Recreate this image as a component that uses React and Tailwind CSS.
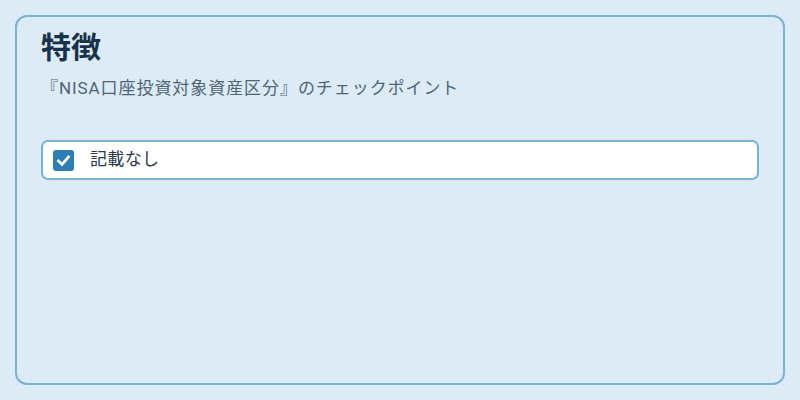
export default function App() {
  return (
    <div
      className="w-[800px] h-[400px] bg-[#dcebf6] p-[15px]"
      style={{ fontFamily: 'Roboto, "Noto Sans CJK JP", "Noto Sans", sans-serif' }}
    >
      <div className="h-full border-2 border-[#7ab2d4] rounded-[12px] px-6 pt-[11px]">
        <h1 className="text-[30px] leading-[40px] font-bold text-[#17324a]">特徴</h1>
        <p className="mt-[8px] text-[17px] leading-6 tracking-[0.055em] text-[#4e6577]">『NISA口座投資対象資産区分』のチェックポイント</p>
        <label className="mt-[40px] flex items-center h-[40px] bg-white border-2 border-[#7ab2d4] rounded-[7px] pl-[10px]">
          <span className="w-[21px] h-[21px] rounded-[3px] bg-[#2f7db6] flex items-center justify-center">
            <svg width="15" height="15" viewBox="0 0 15 15">
              <path d="M2.5 8 L6 11.5 L12.5 4" fill="none" stroke="#fff" strokeWidth="2.8" strokeLinecap="square" />
            </svg>
          </span>
          <span className="ml-[16px] text-[17px] tracking-[0.02em] text-[#27384a]">記載なし</span>
        </label>
      </div>
    </div>
  );
}
